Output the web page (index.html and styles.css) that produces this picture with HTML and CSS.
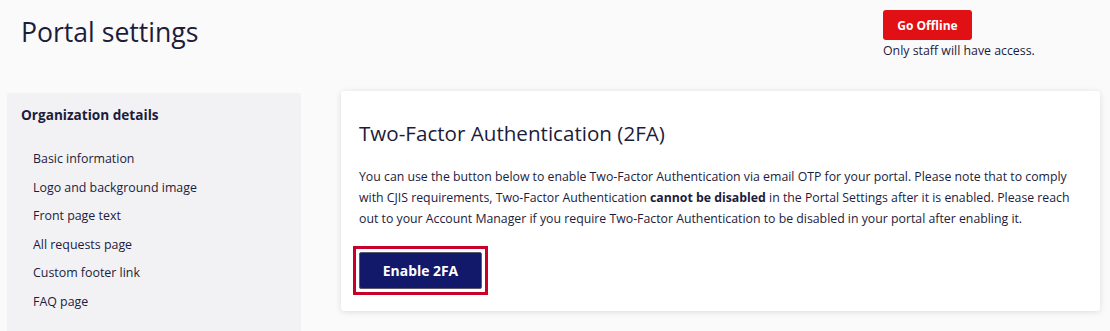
FILE: index.html
```html
<!DOCTYPE html>
<html lang="en">
<head>
    <meta charset="UTF-8">
    <meta name="viewport" content="width=device-width, initial-scale=1.0">
    <title>Portal settings</title>
    <link rel="stylesheet" href="styles.css">
</head>
<body>

<div class="header">
    <h1 class="page-title">Portal settings</h1>
    <div class="offline">
        <button class="btn-offline">Go Offline</button>
        <div class="offline-note">Only staff will have access.</div>
    </div>
</div>

<div class="main">
    <div class="sidebar">
        <div class="sidebar-heading">Organization details</div>
        <ul class="sidebar-nav">
            <li>Basic information</li>
            <li>Logo and background image</li>
            <li>Front page text</li>
            <li>All requests page</li>
            <li>Custom footer link</li>
            <li>FAQ page</li>
        </ul>
    </div>

    <div class="card">
        <h2 class="card-title">Two-Factor Authentication (2FA)</h2>
        <p class="card-text">You can use the button below to enable Two-Factor Authentication via email OTP for your portal. Please note that to comply with CJIS requirements, Two-Factor Authentication <strong>cannot be disabled</strong> in the Portal Settings after it is enabled. Please reach out to your Account Manager if you require Two-Factor Authentication to be disabled in your portal after enabling it.</p>
        <span class="highlight"><button class="btn-enable">Enable 2FA</button></span>
    </div>
</div>

</body>
</html>
```

FILE: styles.css
```css
body {
    font-family: "Open Sans", "Liberation Sans", sans-serif;
    background-color: #fafafb;
    color: #1c1c3c;
    margin: 0;
    padding: 0;
    overflow: hidden;
}
.header {
    display: flex;
    height: 91px;
}
.page-title {
    flex: 1;
    margin: 13px 0 0 21px;
    font-size: 26.6px;
    font-weight: 400;
    line-height: 38px;
}
.offline {
    width: 227px;
    padding-top: 10px;
}
.btn-offline {
    display: block;
    height: 30px;
    width: 89px;
    padding: 0;
    background-color: #e01014;
    color: white;
    border: none;
    border-radius: 3px;
    font-family: inherit;
    font-size: 12px;
    font-weight: 700;
}
.offline-note {
    margin-top: 2px;
    font-size: 12.35px;
    line-height: 18px;
}
.main {
    display: flex;
    align-items: flex-start;
}
.sidebar {
    width: 280px;
    height: 226px;
    margin: 2px 0 0 7px;
    padding: 12px 0 0 14px;
    background-color: #f2f2f5;
    border-radius: 3px 3px 0 0;
}
.sidebar-heading {
    font-size: 13.6px;
    font-weight: 700;
    line-height: 20px;
}
.sidebar-nav {
    list-style: none;
    margin: 20px 0 0 0;
    padding: 0 0 0 12px;
}
.sidebar-nav li {
    font-size: 12.4px;
    line-height: 28.5px;
}
.card {
    flex: 1;
    margin: 0 10px 0 40px;
    padding: 26px 14px 16px 12px;
    background-color: white;
    border-radius: 3px;
    box-shadow: 0 1px 6px rgba(0, 0, 0, 0.12);
}
.card-title {
    margin: 0 0 0 6px;
    font-size: 20.6px;
    font-weight: 400;
    line-height: 32px;
}
.card-text {
    margin: 17px 0 0 6px;
    font-size: 12.3px;
    line-height: 21px;
}
.highlight {
    display: inline-block;
    margin-top: 17px;
    padding: 3px;
    border: 3px solid #c8002a;
}
.btn-enable {
    display: block;
    width: 123px;
    height: 37px;
    background-color: #12186a;
    color: white;
    border: 1px solid #5a5a6a;
    border-radius: 2px;
    font-family: inherit;
    font-size: 13.9px;
    font-weight: 700;
}
```
